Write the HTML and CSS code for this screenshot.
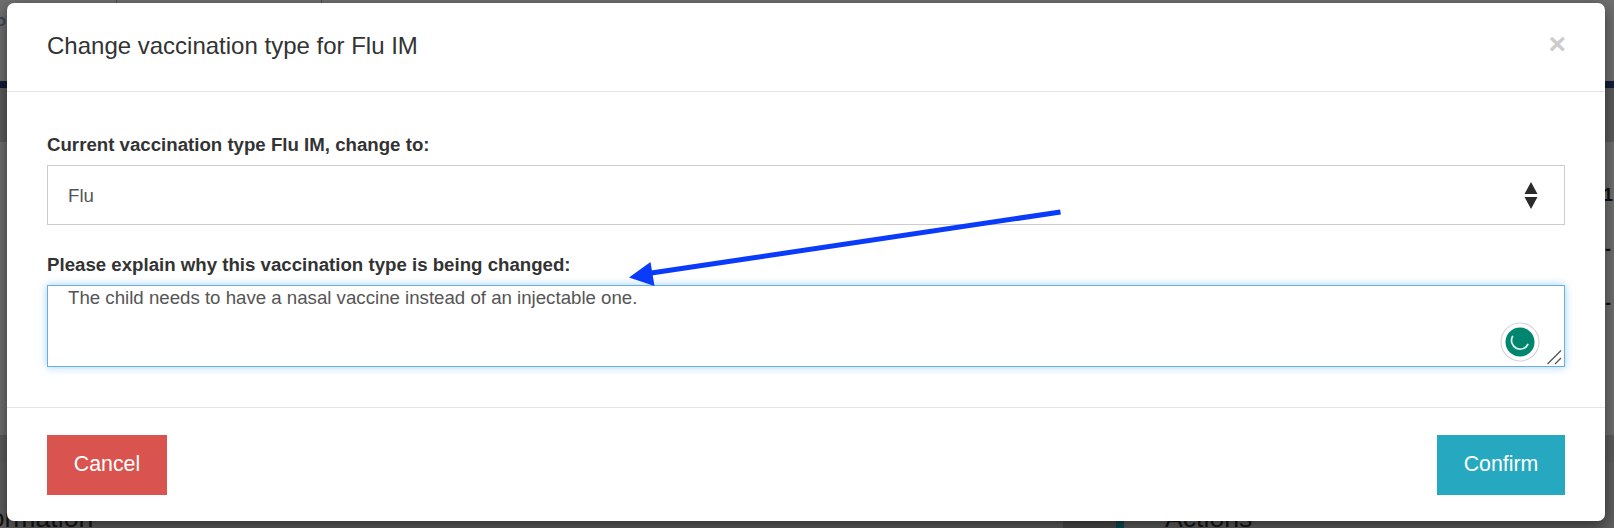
FILE: index.html
```html
<!DOCTYPE html>
<html lang="en">
<head>
<meta charset="utf-8">
<title>Change vaccination type</title>
<link rel="stylesheet" href="styles.css">
</head>
<body>
<div class="page">
  <div class="bg-top">
    <span class="bg-divider bg-divider-a"></span>
    <span class="bg-divider bg-divider-b"></span>
    <span class="bg-letter">P</span>
  </div>
  <div class="bg-navy"></div>
  <div class="bg-band"></div>
  <div class="bg-main">
    <div class="bg-figures">
      <span class="bg-figure">1</span>
      <span class="bg-dash">-</span>
      <span class="bg-dash">-</span>
    </div>
  </div>
  <div class="bg-band bg-band-low"></div>
  <div class="bg-bottom">
    <span class="bg-heading bg-heading-left">Information</span>
    <span class="bg-panel"></span>
    <span class="bg-teal"></span>
    <span class="bg-heading bg-heading-right">Actions</span>
  </div>

  <div class="modal">
    <header class="modal-header">
      <h4 class="modal-title">Change vaccination type for Flu IM</h4>
      <span class="close">×</span>
    </header>
    <div class="modal-body">
      <label class="field-label" for="type">Current vaccination type Flu IM, change to:</label>
      <div class="select-wrap">
        <select class="select" id="type"><option>Flu</option></select>
        <svg class="select-arrows" width="14" height="27" viewBox="0 0 14 27" aria-hidden="true">
          <path d="M7 0 L13.500 12 L0.500 12 Z M0.500 15 L13.500 15 L7 27 Z" fill="#2b2b2b"/>
        </svg>
      </div>
      <label class="field-label field-label-second" for="why">Please explain why this vaccination type is being changed:</label>
      <div class="text-wrap">
        <textarea class="textarea" id="why">The child needs to have a nasal vaccine instead of an injectable one.</textarea>
        <svg class="grammarly" width="40" height="40" viewBox="0 0 40 40" aria-hidden="true">
          <circle cx="20" cy="20" r="19" fill="#fff" stroke="#d5d5e0" stroke-width="1.200"/>
          <circle cx="20" cy="20" r="14.500" fill="#00856f"/>
          <path d="M12.500 14.500 A 8.500 8.500 0 0 0 27.800 22.500" fill="none" stroke="#d6eee9" stroke-width="1.800" stroke-linecap="round"/>
        </svg>
        <svg class="grip" width="15" height="15" viewBox="0 0 15 15" aria-hidden="true">
          <path d="M0.500 14 L14 0.500 M8 14 L14 8" fill="none" stroke="#555" stroke-width="1.300"/>
        </svg>
      </div>
    </div>
    <footer class="modal-footer">
      <button class="btn btn-cancel" type="button">Cancel</button>
      <button class="btn btn-confirm" type="button">Confirm</button>
    </footer>
  </div>

  <svg class="annotation" width="1614" height="528" viewBox="0 0 1614 528" aria-hidden="true">
    <path d="M1060.500 212 L648 273.500" stroke="#0b3bfa" stroke-width="5" fill="none"/>
    <path d="M629 277.500 L650.500 262 L654.500 286 Z" fill="#0b3bfa"/>
  </svg>
</div>
</body>
</html>
```

FILE: styles.css
```css
* { box-sizing: border-box; }

html, body {
  margin: 0;
  padding: 0;
  height: 528px;
  overflow: hidden;
}

body {
  font-family: "Liberation Sans", Arial, sans-serif;
  color: #333;
  background: #6f6f6f;
}

.page {
  position: relative;
  width: 1614px;
  height: 528px;
  overflow: hidden;
  display: flex;
  flex-direction: column;
  background: #6f6f6f;
}

/* dimmed page behind the dialog */
.bg-top {
  position: relative;
  height: 81px;
  flex: none;
}

.bg-divider {
  position: absolute;
  top: 0;
  width: 1px;
  height: 3px;
  background: #4d4d4d;
}
.bg-divider-a { left: 116px; }
.bg-divider-b { left: 321px; }

.bg-letter {
  position: absolute;
  left: -8px;
  top: 12px;
  font-size: 22px;
  color: #3a4658;
}

.bg-navy {
  height: 7px;
  flex: none;
  background: #121d38;
}

.bg-band {
  height: 54px;
  flex: none;
  background: #5c5c5c;
}

.bg-main {
  height: 293px;
  flex: none;
  display: flex;
  justify-content: flex-end;
}

.bg-figures {
  width: 9px;
  margin-top: 44px;
  display: flex;
  flex-direction: column;
  color: #111;
  font-size: 18px;
  line-height: 1;
}
.bg-figure { font-weight: bold; margin-bottom: 36px; margin-left: -2px; }
.bg-dash { font-weight: bold; margin-bottom: 36px; }

.bg-band-low {
  height: 27px;
}

.bg-bottom {
  flex: 1;
  background: #5f5f5f;
  position: relative;
}

.bg-heading {
  position: absolute;
  top: 38px;
  font-size: 26.670px;
  line-height: 36px;
  color: #141414;
}
.bg-heading-left { left: -40px; }
.bg-heading-right { left: 1165px; }

.bg-panel {
  position: absolute;
  left: 1063px;
  top: 27px;
  width: 53px;
  height: 40px;
  background: #4c4c4c;
}

.bg-teal {
  position: absolute;
  left: 1116px;
  top: 52px;
  width: 8px;
  height: 40px;
  background: #0f4a55;
}

/* dialog */
.modal {
  position: absolute;
  left: 7px;
  top: 3px;
  width: 1598px;
  height: 518px;
  background: #fff;
  border-radius: 7px;
  box-shadow: 0 5px 15px rgba(0, 0, 0, .5);
  display: flex;
  flex-direction: column;
}

.modal-header {
  height: 89px;
  flex: none;
  padding: 0 40px 2px;
  display: flex;
  align-items: center;
  justify-content: space-between;
  border-bottom: 1px solid #e5e5e5;
}

.modal-title {
  margin: 0;
  font-size: 24px;
  font-weight: normal;
  line-height: 1.2;
  color: #333;
}

.close {
  font-size: 30px;
  font-weight: bold;
  line-height: 1;
  color: #ccc;
  position: relative;
  top: -2px;
  left: 1px;
}

.modal-body {
  height: 315px;
  flex: none;
  padding: 43px 40px 0;
  display: flex;
  flex-direction: column;
}

.field-label {
  display: block;
  font-size: 18.670px;
  font-weight: bold;
  line-height: 20px;
  color: #333;
}

.field-label-second { margin-top: 30px; }

.select-wrap {
  position: relative;
  margin-top: 10px;
}

.select {
  display: block;
  width: 100%;
  height: 60px;
  padding: 0 20px;
  border: 1px solid #ccc;
  border-radius: 0;
  background: #fff;
  color: #555;
  font-family: inherit;
  font-size: 18.670px;
  appearance: none;
  -webkit-appearance: none;
}

.select-arrows {
  position: absolute;
  right: 27px;
  top: 17px;
}

.text-wrap {
  position: relative;
  margin-top: 10px;
}

.textarea {
  display: block;
  width: 100%;
  height: 82px;
  padding: 0 20px;
  border: 1px solid #66afe9;
  border-radius: 0;
  outline: 0;
  box-shadow: 0 0 8px rgba(102, 175, 233, .6);
  background: #fff;
  color: #555;
  font-family: inherit;
  font-size: 18.670px;
  line-height: 24px;
  resize: none;
}

.grammarly {
  position: absolute;
  right: 25px;
  bottom: 5px;
}

.grip {
  position: absolute;
  right: 3px;
  bottom: 2px;
}

.modal-footer {
  flex: 1;
  padding: 27px 40px 0;
  display: flex;
  justify-content: space-between;
  align-items: flex-start;
  border-top: 1px solid #e5e5e5;
}

.btn {
  height: 60px;
  border: 0;
  border-radius: 0;
  color: #fff;
  font-family: inherit;
  font-size: 21.330px;
  line-height: 1;
  padding: 0;
}

.btn-cancel { width: 120px; background: #d9534f; }
.btn-confirm { width: 128px; background: #26a9c0; }

.annotation {
  position: absolute;
  left: 0;
  top: 0;
  pointer-events: none;
}
```
